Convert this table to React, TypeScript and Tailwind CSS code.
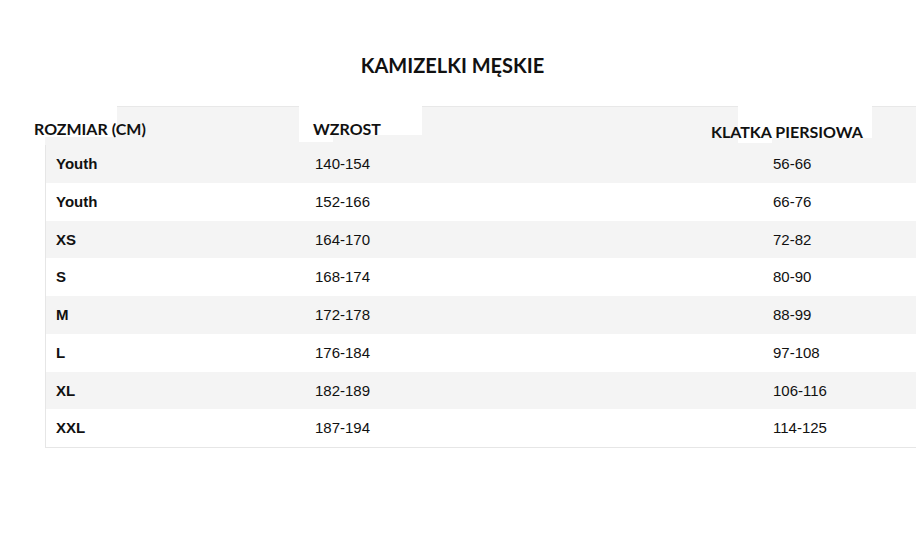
import React from 'react';

const rows = [
  { size: 'Youth', height: '140-154', chest: '56-66' },
  { size: 'Youth', height: '152-166', chest: '66-76' },
  { size: 'XS', height: '164-170', chest: '72-82' },
  { size: 'S', height: '168-174', chest: '80-90' },
  { size: 'M', height: '172-178', chest: '88-99' },
  { size: 'L', height: '176-184', chest: '97-108' },
  { size: 'XL', height: '182-189', chest: '106-116' },
  { size: 'XXL', height: '187-194', chest: '114-125' },
];

const headFont = { fontFamily: 'Lato, "Open Sans", sans-serif' };

const App = () => {
  return (
    <div className="w-[916px] h-[540px] bg-white overflow-hidden text-[#111]">
      <h1
        className="pt-[52px] h-[106px] text-center text-[20px] font-bold pr-[11px] leading-[26px]"
        style={headFont}
      >
        KAMIZELKI MĘSKIE
      </h1>

      {/* header row: grey band with white patches pasted over the labels */}
      <div className="relative h-[39px]">
        <div className="absolute left-[117px] right-0 top-0 bottom-0 bg-[#f4f4f4] border-t border-[#e8e8e8]" />
        <div className="absolute left-[45px] w-[72px] top-[31px] bottom-0 bg-[#f4f4f4]" />
        <div className="absolute left-[299px] w-[123px] top-[-1px] h-[30px] bg-white" />
        <div className="absolute left-[299px] w-[34px] top-[-1px] h-[37px] bg-white" />
        <div className="absolute left-[738px] w-[134px] top-[-1px] h-[33px] bg-white" />
        <div className="absolute left-[738px] w-[34px] top-[-1px] h-[38px] bg-white" />
        <div className="relative flex font-bold text-[16px] leading-[20px]" style={headFont}>
          <span className="w-[313px] pl-[34px] pt-[13px]">ROZMIAR (CM)</span>
          <span className="w-[398px] pt-[13px]">WZROST</span>
          <span className="pt-[16px]">KLATKA PIERSIOWA</span>
        </div>
      </div>

      <div
        className="ml-[45px] border-l border-b border-[#e6e6e6] text-[15px]"
        style={{ fontFamily: '"Liberation Sans", Arial, sans-serif' }}
      >
        {rows.map((r, i) => (
          <div
            key={i}
            className={`flex items-center pt-[1px] h-[37.75px] ${i % 2 === 0 ? 'bg-[#f4f4f4]' : 'bg-white'}`}
          >
            <div className="w-[259px] pl-[10px] font-bold">{r.size}</div>
            <div className="w-[458px] pl-[10px]">{r.height}</div>
            <div className="pl-[10px]">{r.chest}</div>
          </div>
        ))}
      </div>
    </div>
  );
};

export default App;
